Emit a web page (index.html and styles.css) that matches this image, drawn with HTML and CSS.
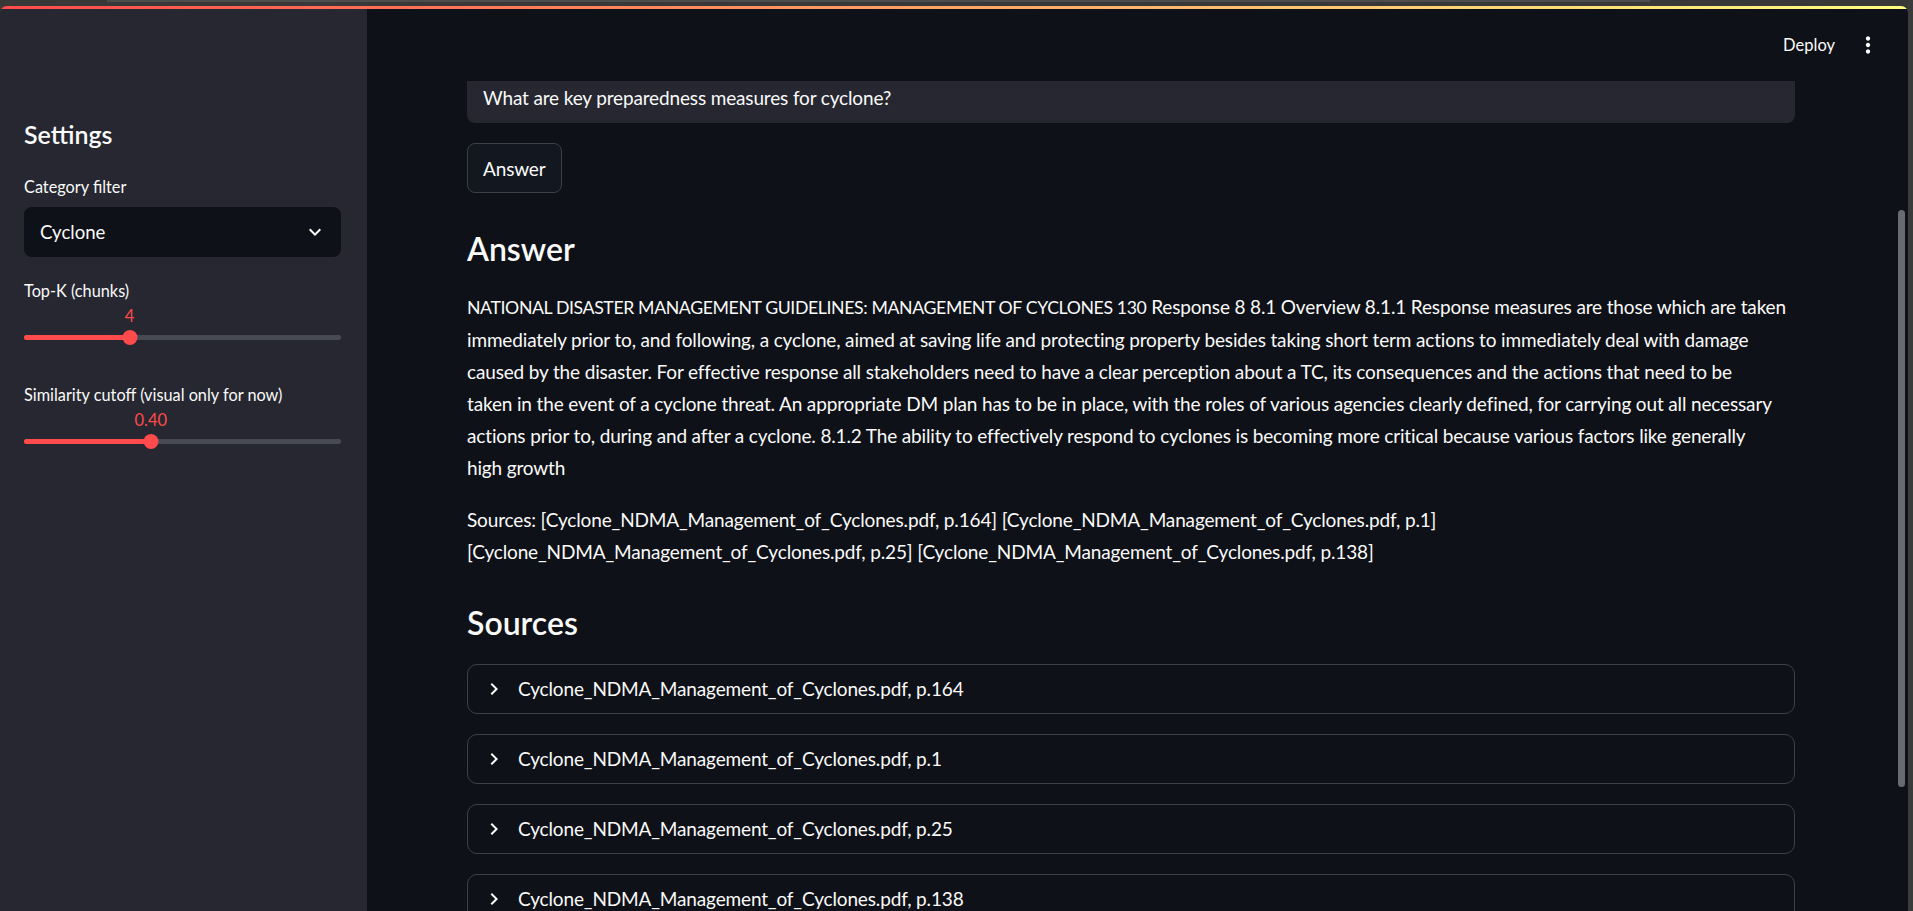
FILE: index.html
```html
<!DOCTYPE html>
<html lang="en">
<head>
<meta charset="utf-8">
<title>Disaster Guidelines QA</title>
<link rel="stylesheet" href="styles.css">
</head>
<body>
<div class="frame">
  <div class="chrome"><div class="chrome-tab"></div></div>
  <div class="app">
    <div class="decoration"></div>
    <div class="app-body">
      <aside class="sidebar">
        <h2 class="sb-title">Settings</h2>
        <label class="sb-label">Category filter</label>
        <div class="select">
          <span>Cyclone</span>
          <svg class="select-icon" viewBox="0 0 24 24" width="24" height="24"><path fill="#fafafa" d="M16.59 8.59 12 13.17 7.41 8.59 6 10l6 6 6-6z"/></svg>
        </div>
        <label class="sb-label sb-label-slider">Top-K (chunks)</label>
        <div class="slider">
          <div class="slider-values"><span style="left:33.33%">4</span></div>
          <div class="slider-track">
            <div class="rail"></div>
            <div class="fill" style="width:33.33%"></div>
            <div class="knob" style="left:33.33%"></div>
          </div>
        </div>
        <label class="sb-label sb-label-slider2">Similarity cutoff (visual only for now)</label>
        <div class="slider">
          <div class="slider-values"><span style="left:40%">0.40</span></div>
          <div class="slider-track">
            <div class="rail"></div>
            <div class="fill" style="width:40%"></div>
            <div class="knob" style="left:40%"></div>
          </div>
        </div>
      </aside>
      <main class="main">
        <div class="main-col">
          <header class="topbar">
            <span class="deploy">Deploy</span>
            <svg class="kebab" viewBox="0 0 24 24" width="26" height="26"><path fill="#fafafa" d="M12 8c1.1 0 2-.9 2-2s-.9-2-2-2-2 .9-2 2 .9 2 2 2zm0 2c-1.1 0-2 .9-2 2s.9 2 2 2 2-.9 2-2-.9-2-2-2zm0 6c-1.1 0-2 .9-2 2s.9 2 2 2 2-.9 2-2-.9-2-2-2z"/></svg>
          </header>
          <div class="content">
            <div class="text-input">What are key preparedness measures for cyclone?</div>
            <button class="btn">Answer</button>
            <h3 class="heading">Answer</h3>
            <div class="md">
              <p class="answer-text"><span class="caps">NATIONAL DISASTER MANAGEMENT GUIDELINES: MANAGEMENT OF CYCLONES 130</span> Response 8 8.1 Overview 8.1.1 Response measures are those which are taken<br>immediately prior to, and following, a cyclone, aimed at saving life and protecting property besides taking short term actions to immediately deal with damage<br>caused by the disaster. For effective response all stakeholders need to have a clear perception about a TC, its consequences and the actions that need to be<br>taken in the event of a cyclone threat. An appropriate DM plan has to be in place, with the roles of various agencies clearly defined, for carrying out all necessary<br>actions prior to, during and after a cyclone. 8.1.2 The ability to effectively respond to cyclones is becoming more critical because various factors like generally<br>high growth</p>
              <p>Sources: [Cyclone_NDMA_Management_of_Cyclones.pdf, p.164] [Cyclone_NDMA_Management_of_Cyclones.pdf, p.1] [Cyclone_NDMA_Management_of_Cyclones.pdf, p.25] [Cyclone_NDMA_Management_of_Cyclones.pdf, p.138]</p>
            </div>
            <h3 class="heading heading-sources">Sources</h3>
            <div class="expander">
              <svg class="chev" viewBox="0 0 24 24" width="24" height="24"><path fill="#fafafa" d="M10 6 8.59 7.41 13.17 12l-4.58 4.59L10 18l6-6z"/></svg>
              <span>Cyclone_NDMA_Management_of_Cyclones.pdf, p.164</span>
            </div>
            <div class="expander">
              <svg class="chev" viewBox="0 0 24 24" width="24" height="24"><path fill="#fafafa" d="M10 6 8.59 7.41 13.17 12l-4.58 4.59L10 18l6-6z"/></svg>
              <span>Cyclone_NDMA_Management_of_Cyclones.pdf, p.1</span>
            </div>
            <div class="expander">
              <svg class="chev" viewBox="0 0 24 24" width="24" height="24"><path fill="#fafafa" d="M10 6 8.59 7.41 13.17 12l-4.58 4.59L10 18l6-6z"/></svg>
              <span>Cyclone_NDMA_Management_of_Cyclones.pdf, p.25</span>
            </div>
            <div class="expander">
              <svg class="chev" viewBox="0 0 24 24" width="24" height="24"><path fill="#fafafa" d="M10 6 8.59 7.41 13.17 12l-4.58 4.59L10 18l6-6z"/></svg>
              <span>Cyclone_NDMA_Management_of_Cyclones.pdf, p.138</span>
            </div>
          </div>
        </div>
        <div class="vscroll"><div class="vscroll-thumb"></div></div>
      </main>
    </div>
  </div>
</div>
</body>
</html>
```
FILE: styles.css
```css
* { box-sizing: border-box; }
html, body { margin: 0; padding: 0; }
body {
  width: 1913px;
  height: 911px;
  overflow: hidden;
  background: #3b3b3b;
  font-family: Lato, "Liberation Sans", sans-serif;
  color: #fafafa;
}
.frame {
  height: 911px;
  display: flex;
  flex-direction: column;
  padding-right: 5px;
}
.chrome {
  height: 6px;
  flex: none;
  background: #383838;
}
.chrome-tab {
  margin-left: 107px;
  width: 1543px;
  height: 2px;
  background: #4d4d4d;
}
.app {
  flex: 1;
  min-height: 0;
  display: flex;
  flex-direction: column;
  border-radius: 7px 7px 0 0;
  overflow: hidden;
}
.decoration {
  height: 3px;
  flex: none;
  background: linear-gradient(90deg, #ff4b4b, #fffd80);
}
.app-body {
  flex: 1;
  min-height: 0;
  display: flex;
}
/* Sidebar */
.sidebar {
  width: 367px;
  flex: none;
  background: #262730;
  padding: 109px 26px 0 24px;
}
.sb-title {
  margin: 0;
  font-size: 25px;
  font-weight: 600;
  line-height: 33.6px;
}
.sb-label {
  display: block;
  margin-top: 21px;
  font-size: 16.3px;
  line-height: 28px;
}
.sb-label-slider { margin-top: 20px; }
.sb-label-slider2 { margin-top: 36.5px; }
.select {
  margin-top: 6px;
  height: 50px;
  background: #0e1117;
  border-radius: 8px;
  display: flex;
  align-items: center;
  justify-content: space-between;
  padding: 0 14px 0 16px;
  font-size: 18.6px;
}
.select-icon { display: block; }
.slider {
  display: flex;
  flex-direction: column;
}
.slider-values {
  position: relative;
  height: 20px;
  margin-top: 1px;
  font-size: 16.5px;
  line-height: 20px;
  color: #ff4b4b;
}
.slider-values span {
  position: absolute;
  top: 0;
  transform: translateX(-50%);
  white-space: nowrap;
}
.slider-track {
  position: relative;
  height: 15px;
  margin-top: 4px;
}
.rail, .fill {
  position: absolute;
  left: 0;
  top: 5px;
  height: 5px;
  border-radius: 3px;
}
.rail { right: 0; background: #474955; }
.fill { background: #ff4b4b; }
.knob {
  position: absolute;
  top: 0;
  width: 15px;
  height: 15px;
  border-radius: 50%;
  background: #ff4b4b;
  transform: translateX(-50%);
}
/* Main */
.main {
  flex: 1;
  min-width: 0;
  display: flex;
  background: #0e1117;
}
.main-col {
  flex: 1;
  min-width: 0;
  display: flex;
  flex-direction: column;
  overflow: hidden;
}
.topbar {
  height: 72px;
  flex: none;
  display: flex;
  align-items: center;
  justify-content: flex-end;
  gap: 20px;
  padding-right: 17px;
}
.deploy {
  font-size: 16.5px;
  line-height: 24px;
}
.kebab { display: block; }
.content {
  padding: 0 103px 0 100px;
  display: flex;
  flex-direction: column;
  gap: 20px;
  font-size: 19px;
  letter-spacing: -0.15px;
}
.text-input {
  height: 42px;
  background: #262730;
  border-radius: 0 0 8px 8px;
  padding: 1px 16px 0;
  line-height: 32px;
}
.btn {
  align-self: flex-start;
  height: 50px;
  padding: 0 15px;
  border: 1px solid #3d4044;
  border-radius: 8px;
  background: #131720;
  color: #fafafa;
  font-family: inherit;
  font-size: 19px;
  letter-spacing: -0.15px;
}
.heading {
  margin: 0;
  padding: 14.5px 0 1px;
  font-size: 32px;
  font-weight: 600;
  line-height: 42px;
  letter-spacing: 0;
}
.heading-sources { padding: 14px 0 0; }
.md p {
  margin: 0 0 20px;
  line-height: 32px;
}
.md p:last-child { margin-bottom: 0; }
.caps {
  font-size: 17.7px;
  letter-spacing: -0.38px;
}
.expander {
  flex: none;
  height: 50px;
  border: 1px solid #3d4044;
  border-radius: 10px;
  display: flex;
  align-items: center;
  gap: 12px;
  padding-left: 14px;
}
.chev { display: block; flex: none; }
.vscroll {
  width: 10px;
  flex: none;
  padding-top: 201px;
}
.vscroll-thumb {
  width: 7px;
  height: 577px;
  border-radius: 4px;
  background: #6a6b70;
}
```
